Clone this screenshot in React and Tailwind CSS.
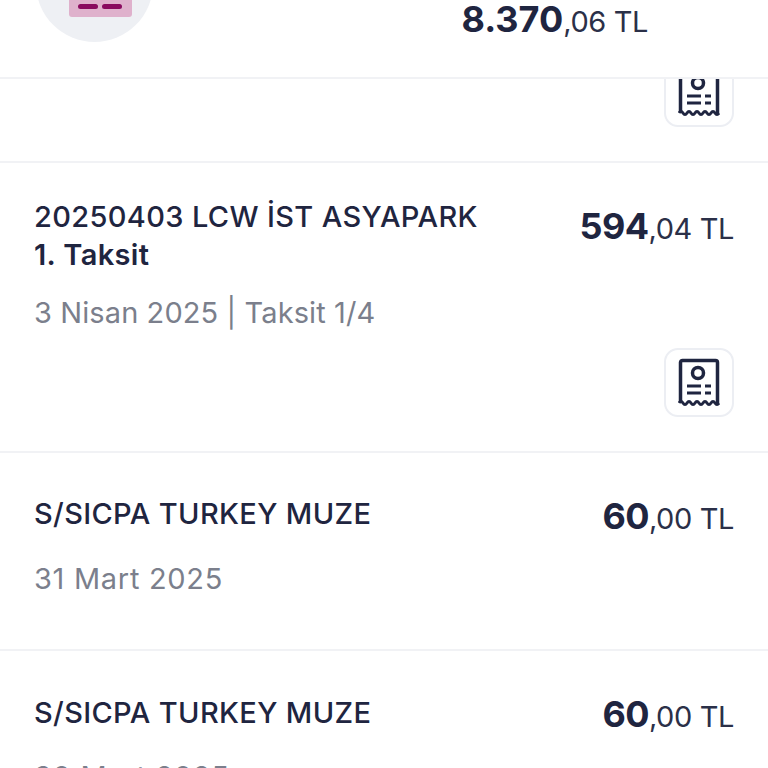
const FONT = "font-['Inter','Noto_Sans',sans-serif]";

function ReceiptIcon() {
  return (
    <svg width="42" height="50" viewBox="0 0 42 50" fill="none" stroke="#1f2540" strokeWidth="3.500">
      <path d="M2.500 45V4.500A2 2 0 0 1 4.500 2.500H37.500A2 2 0 0 1 39.500 4.500V45" />
      <path d="M1 45q2-3 4 0t4 0t4 0t4 0t4 0t4 0t4 0t4 0t4 0t4 0" strokeWidth="3" />
      <circle cx="20" cy="15" r="5.500" />
      <path d="M9 28H23M27 28H33M9 35H23M27 35H33" strokeWidth="3" />
    </svg>
  );
}

function ReceiptButton() {
  return (
    <button
      type="button"
      className="flex h-[69px] w-[70px] items-center justify-center rounded-[14px] border-2 border-[#eceef3] bg-white"
    >
      <ReceiptIcon />
    </button>
  );
}

function Amount({ whole, rest, wide }) {
  return (
    <div className="whitespace-nowrap text-[#1f2540]">
      <span className={`text-[36px] font-bold ${wide ? "tracking-[0px]" : "tracking-[-0.6px]"}`}>{whole}</span>
      <span className="text-[29px] tracking-[-0.4px] text-[#2b3048]">{rest}</span>
    </div>
  );
}

function Row({ title, subtitle, date, whole, rest, receipt, className, amountClass, dateClass }) {
  return (
    <div className={`overflow-hidden border-b-2 border-[#f1f2f5] pl-[34px] pr-[34px] ${className}`}>
      <div className="flex items-start justify-between">
        <div className="text-[29px] leading-[38px] tracking-[0.35px] text-[#1f2540]">
          <div className="font-medium">{title}</div>
          {subtitle && <div className="font-semibold">{subtitle}</div>}
        </div>
        <div className={amountClass}>
          <Amount whole={whole} rest={rest} />
        </div>
      </div>
      <div className={`text-[29px] leading-[38px] text-[#7b7f8c] ${dateClass}`}>{date}</div>
      {receipt && (
        <div className="mt-[16px] flex justify-end">
          <ReceiptButton />
        </div>
      )}
    </div>
  );
}

export default function App() {
  return (
    <div className={`flex h-[768px] flex-col overflow-hidden bg-white ${FONT}`}>
      <header className="flex h-[79px] shrink-0 justify-between border-b-2 border-[#f1f2f5] pl-[36px] pr-[120px]">
        <div className="-mt-[75px] flex h-[117px] w-[117px] items-end justify-center rounded-full bg-[#eef0f4] pb-[25px]">
          <div className="ml-[11px] flex h-[28px] w-[63px] shrink-0 items-end justify-center gap-[4px] rounded-b-[3px] bg-[#dfb1cc] pb-[8px]">
            <span className="h-[5px] w-[20px] rounded-full bg-[#8a0a5f]" />
            <span className="h-[5px] w-[20px] rounded-full bg-[#8a0a5f]" />
          </div>
        </div>
        <div className="-mt-[8px]">
          <Amount whole="8.370" rest=",06 TL" wide />
        </div>
      </header>
      <div className="flex h-[84px] shrink-0 items-end justify-end overflow-hidden border-b-2 border-[#f1f2f5] pb-[34px] pr-[34px]">
        <div className="shrink-0">
          <ReceiptButton />
        </div>
      </div>
      <Row
        className="h-[290px] shrink-0 pt-[35px]"
        amountClass="mt-[1px]"
        dateClass="mt-[20px] tracking-[0.1px]"
        title="20250403 LCW İST ASYAPARK"
        subtitle="1. Taksit"
        date="3 Nisan 2025 | Taksit 1/4"
        whole="594"
        rest=",04 TL"
        receipt
      />
      <Row
        className="h-[198px] shrink-0 pt-[42px]"
        amountClass="-mt-[6px]"
        dateClass="mt-[17px] tracking-[0.7px]"
        title="S/SICPA TURKEY MUZE"
        date="31 Mart 2025"
        whole="60"
        rest=",00 TL"
      />
      <Row
        className="h-[199px] shrink-0 pt-[43px]"
        amountClass="-mt-[7px]"
        dateClass="mt-[17px] tracking-[0.7px]"
        title="S/SICPA TURKEY MUZE"
        date="30 Mart 2025"
        whole="60"
        rest=",00 TL"
      />
    </div>
  );
}
